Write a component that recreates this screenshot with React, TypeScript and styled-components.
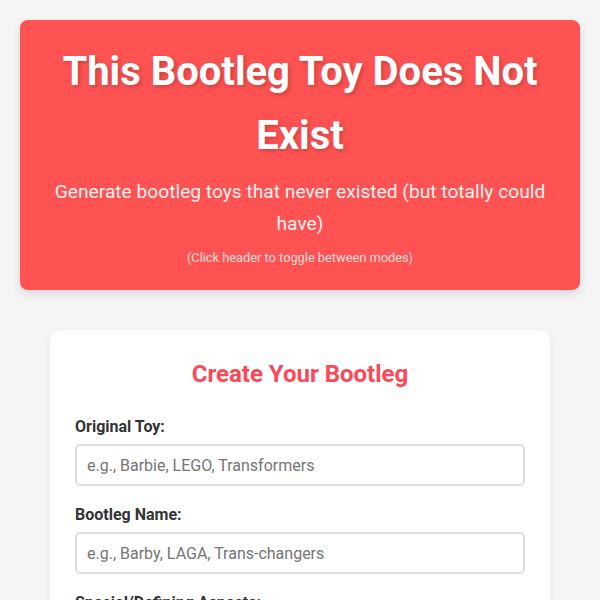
import React from "react";
import styled, { createGlobalStyle } from "styled-components";

const GlobalStyle = createGlobalStyle`
  body {
    margin: 0;
    padding: 20px;
    background: #f5f5f5;
    font-family: Roboto, "Liberation Sans", sans-serif;
    color: #333;
  }
`;

const Header = styled.header`
  background: #ff5252;
  color: #fff;
  border-radius: 8px;
  padding: 20px 20px 22px;
  text-align: center;
  box-shadow: 0 4px 10px rgba(0, 0, 0, 0.12);
  cursor: pointer;
`;

const Title = styled.h1`
  font-size: 40px;
  line-height: 64px;
  font-weight: 700;
  margin: 0;
  text-shadow: 2px 2px 4px rgba(0, 0, 0, 0.2);
`;

const Subtitle = styled.p`
  font-size: 19.2px;
  line-height: 32px;
  margin: 8px 0 0;
  opacity: 0.92;
`;

const Hint = styled.p`
  font-size: 12.8px;
  line-height: 21px;
  margin: 7px 0 0;
  opacity: 0.8;
`;

const Card = styled.div`
  max-width: 450px;
  margin: 40px auto 0;
  background: #fff;
  border-radius: 10px;
  padding: 30px 25px;
  box-shadow: 0 2px 10px rgba(0, 0, 0, 0.06);
`;

const CardTitle = styled.h2`
  font-size: 24px;
  line-height: 28px;
  font-weight: 700;
  color: #ff4757;
  text-align: center;
  margin: 0 0 29px;
`;

const Field = styled.div`
  margin-bottom: 19px;
`;

const Label = styled.label`
  display: block;
  font-size: 16px;
  line-height: 19px;
  font-weight: 700;
  color: #333;
  margin-bottom: 8px;
`;

const Input = styled.input`
  display: block;
  width: 100%;
  box-sizing: border-box;
  height: 42px;
  padding: 10px;
  font-family: inherit;
  font-size: 16px;
  border: 2px solid #ddd;
  border-radius: 5px;
  outline: none;

  &::placeholder {
    color: #757575;
  }
`;

const fields = [
  { label: "Original Toy:", placeholder: "e.g., Barbie, LEGO, Transformers" },
  { label: "Bootleg Name:", placeholder: "e.g., Barby, LAGA, Trans-changers" },
  { label: "Special/Defining Aspects:", placeholder: "e.g., Extra arms, glows in the dark" },
];

const App = () => {
  return (
    <>
      <GlobalStyle />
      <Header>
        <Title>This Bootleg Toy Does Not Exist</Title>
        <Subtitle>Generate bootleg toys that never existed (but totally could have)</Subtitle>
        <Hint>(Click header to toggle between modes)</Hint>
      </Header>
      <Card>
        <CardTitle>Create Your Bootleg</CardTitle>
        {fields.map((f) => (
          <Field key={f.label}>
            <Label>{f.label}</Label>
            <Input placeholder={f.placeholder} />
          </Field>
        ))}
      </Card>
    </>
  );
};

export default App;
